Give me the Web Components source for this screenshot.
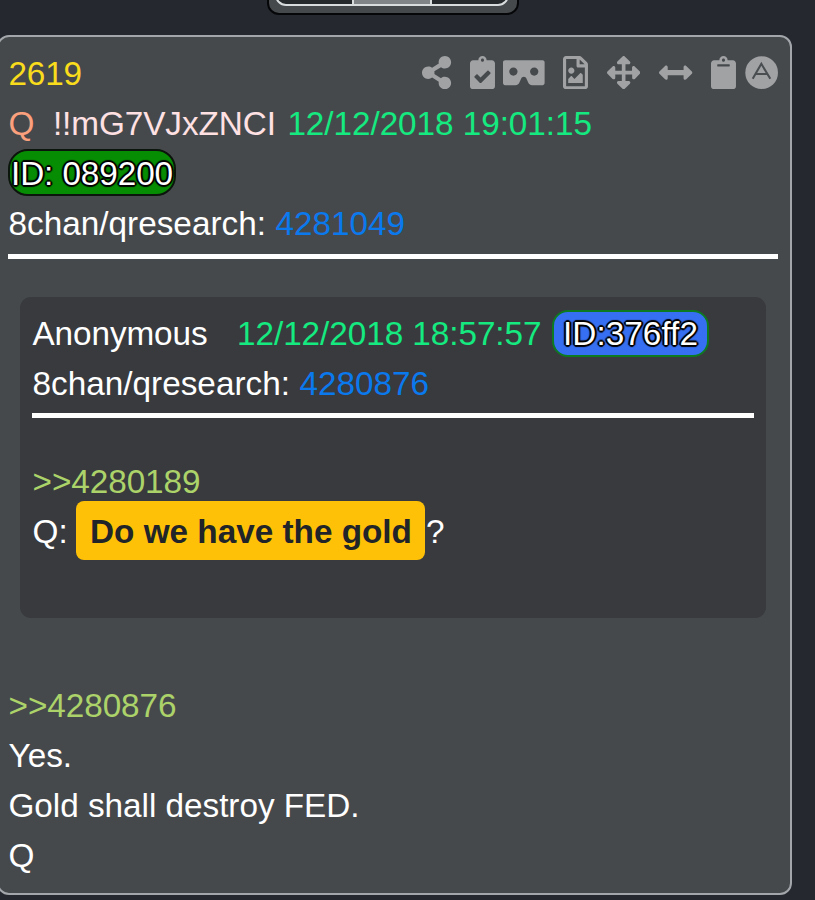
<!DOCTYPE html>
<html lang="en">
<head>
<meta charset="utf-8">
<title>2619</title>
<style>
	html, body {
		margin: 0;
		height: 900px;
		overflow: hidden;
		background: #25282f;
	}

	body {
		display: flex;
		flex-direction: column;
		font: 33.3px/50px "Liberation Sans", Arial, sans-serif;
		color: #fff;
	}
</style>
</head>
<body>
<page-switch></page-switch>
<post-card>
	<post-header slot="header" number="2619" board="8chan/qresearch:" link="4281049">
		<post-actions slot="actions"></post-actions>
		<text-run slot="author" tone="salmon">Q</text-run>
		<text-run slot="author" tone="trip" w="223" style="margin-left: 18px">!!mG7VJxZNCI</text-run>
		<text-run slot="author" tone="date" w="304.5" style="margin-left: 11px">12/12/2018 19:01:15</text-run>
		<id-badge slot="badge" tone="green">ID: 089200</id-badge>
	</post-header>
	<quoted-post>
		<post-header slot="header" board="8chan/qresearch:" link="4280876">
			<text-run slot="author" w="175">Anonymous</text-run>
			<text-run slot="author" tone="date" w="304.5" style="margin-left: 29px">12/12/2018 18:57:57</text-run>
			<id-badge slot="author" tone="blue">ID:376ff2</id-badge>
		</post-header>
		<post-line><text-run tone="quote" w="168">&gt;&gt;4280189</text-run></post-line>
		<post-line><text-run w="35.5">Q:</text-run><mark-text>Do we have the gold</mark-text><text-run>?</text-run></post-line>
	</quoted-post>
	<post-line><text-run tone="quote" w="168">&gt;&gt;4280876</text-run></post-line>
	<post-line><text-run>Yes.</text-run></post-line>
	<post-line><text-run w="351">Gold shall destroy FED.</text-run></post-line>
	<post-line><text-run>Q</text-run></post-line>
</post-card>

<script>
const define = (name, html, setup) => {
	const template = document.createElement('template');
	template.innerHTML = html;

	customElements.define(name, class extends HTMLElement {
		constructor() {
			super();
			this.attachShadow({ mode: 'open' }).appendChild(template.content.cloneNode(true));
		}

		connectedCallback() {
			if (setup) {
				setup(this, this.shadowRoot);
			}
		}
	});
};

// letter spacing that makes the span fill the given width
const fit = (span, width, length) => {
	document.addEventListener('DOMContentLoaded', () => {
		span.style.letterSpacing = (width - span.getBoundingClientRect().width) / length + 'px';
	});
};

define('page-switch', `
	<style>
		:host {
			flex: none;
			box-sizing: border-box;
			width: 252px;
			height: 45px;
			margin: -30px 0 0 267px;
			padding: 0 8px 7px 6px;
			display: flex;
			border: 2px solid #050608;
			border-radius: 12px;
			background: #46494c;
		}

		.group {
			flex: 1;
			display: flex;
			overflow: hidden;
			border: 2px solid #d9dcdd;
			border-radius: 11px;
			background: #25292c;
		}

		.group span {
			flex: 1;
		}

		.active {
			border: solid #d9dcdd;
			border-width: 0 2px;
			background: #808486;
		}
	</style>
	<div class="group"><span></span><span class="active"></span><span></span></div>
`);

define('post-card', `
	<style>
		:host {
			flex: none;
			box-sizing: border-box;
			width: 795px;
			height: 860px;
			margin: 20px 0 0 -3px;
			padding: 12px 12px 0 9px;
			display: flex;
			flex-direction: column;
			border: 2px solid #a3a6aa;
			border-radius: 12px;
			background: #46494c;
		}
	</style>
	<slot name="header"></slot>
	<slot></slot>
`);

define('quoted-post', `
	<style>
		:host {
			--header-gap: 4px;
			box-sizing: border-box;
			width: 746px;
			height: 321px;
			flex: none;
			margin: 38px 0 63px 12px;
			padding: 12px 12px 0;
			display: flex;
			flex-direction: column;
			border-radius: 11px;
			background: #383a3d;
		}

		.body {
			margin-top: 39px;
		}
	</style>
	<slot name="header"></slot>
	<div class="body"><slot></slot></div>
`);

define('post-header', `
	<style>
		:host {
			flex: none;
			display: flex;
			flex-direction: column;
			border-bottom: 5px solid #fff;
			padding-bottom: var(--header-gap, 5px);
		}

		.row {
			display: flex;
			height: 50px;
			align-items: center;
			white-space: nowrap;
		}

		.number {
			flex: 1;
			color: #f9dc1c;
		}

		.link {
			margin-left: 9px;
			color: #0b79ee;
		}

		[hidden] {
			display: none;
		}
	</style>
	<div class="row top"><text-run class="number" w="73.5"></text-run><slot name="actions"></slot></div>
	<div class="row"><slot name="author"></slot></div>
	<div class="row mid"><slot name="badge"></slot></div>
	<div class="row"><text-run class="board" w="257.5"></text-run><text-run class="link" w="129.5"></text-run></div>
`, (host, root) => {
	const number = host.getAttribute('number');

	root.querySelector('.number').textContent = number || '';
	root.querySelector('.board').textContent = host.getAttribute('board');
	root.querySelector('.link').textContent = host.getAttribute('link');
	root.querySelector('.top').hidden = !number;
	root.querySelector('.mid').hidden = !host.querySelector('[slot=badge]');
});

define('post-line', `
	<style>
		:host {
			flex: none;
			display: flex;
			height: 50px;
			align-items: center;
			white-space: nowrap;
		}
	</style>
	<slot></slot>
`);

define('text-run', `
	<style>
		:host {
			display: block;
			padding-left: 0.5px;
			white-space: nowrap;
		}

		:host([tone=salmon]) { color: #fba07c; }
		:host([tone=trip]) { color: #ffe1e3; }
		:host([tone=date]) { color: #15ea80; }
		:host([tone=quote]) { color: #acd36a; }
	</style>
	<span><slot></slot></span>
`, (host, root) => {
	const width = parseFloat(host.getAttribute('w'));

	if (width && host.textContent) {
		fit(root.querySelector('span'), width, host.textContent.length);
	}
});

define('id-badge', `
	<style>
		:host {
			box-sizing: border-box;
			height: 47px;
			display: block;
			line-height: 44px;
			white-space: nowrap;
			color: #fff;
			text-shadow:
				-2px 0 1px #000, 2px 0 1px #000, 0 -2px 1px #000, 0 2px 1px #000,
				-1px -1px 1px #000, 1px -1px 1px #000, -1px 1px 1px #000, 1px 1px 1px #000;
		}

		:host([tone=green]) {
			width: 168px;
			margin-top: -3px;
			padding-left: 1px;
			line-height: 46px;
			border: 2px solid #0b150b;
			border-radius: 20px;
			background: #078d04;
		}

		:host([tone=blue]) {
			width: 157px;
			margin: -2px 0 0 10.5px;
			padding-left: 9px;
			border: 2px solid #0d7a22;
			border-radius: 16px;
			background: #376ff2;
		}
	</style>
	<span><slot></slot></span>
`, (host, root) => {
	fit(root.querySelector('span'), host.getAttribute('tone') === 'green' ? 162 : 135, host.textContent.length);
});

define('mark-text', `
	<style>
		:host {
			flex: none;
			box-sizing: border-box;
			width: 349px;
			height: 59px;
			margin: -3px 0.5px 0 8px;
			padding: 2px 0 0 1px;
			display: flex;
			justify-content: center;
			align-items: center;
			border-radius: 8px;
			background: #ffc107;
			color: #212529;
			font-weight: bold;
		}
	</style>
	<slot></slot>
`);

define('post-actions', `
	<style>
		:host {
			display: flex;
			align-items: center;
			height: 34px;
			margin-top: -3px;
			color: #a0a2a4;
		}

		svg {
			flex: none;
			height: 33.3px;
			fill: currentColor;
		}
	</style>
	<svg viewBox="0 0 448 512"><path d="M352 320c-22.608 0-43.387 7.819-59.79 20.895l-102.486-64.054a96.551 96.551 0 0 0 0-41.683l102.486-64.054C308.613 184.181 329.392 192 352 192c53.019 0 96-42.981 96-96S405.019 0 352 0s-96 42.981-96 96c0 7.158.79 14.13 2.276 20.841L155.79 180.895C139.387 167.819 118.608 160 96 160c-53.019 0-96 42.981-96 96s42.981 96 96 96c22.608 0 43.387-7.819 59.79-20.895l102.486 64.054A96.301 96.301 0 0 0 256 416c0 53.019 42.981 96 96 96s96-42.981 96-96-42.981-96-96-96z"/></svg>
	<svg viewBox="0 0 384 512" style="margin-left: 18px"><path fill-rule="evenodd" d="M336 64h-80c0-35.3-28.7-64-64-64s-64 28.7-64 64H48C21.5 64 0 85.5 0 112v352c0 26.5 21.5 48 48 48h288c26.5 0 48-21.5 48-48V112c0-26.5-21.5-48-48-48zM192 40c13.3 0 24 10.7 24 24s-10.7 24-24 24-24-10.7-24-24 10.7-24 24-24zm121.2 231.8l-143 141.8c-4.7 4.7-12.3 4.6-17-.1l-82.6-83.3c-4.7-4.7-4.6-12.3.1-17L99.1 285c4.7-4.7 12.3-4.6 17 .1l46 46.4 106-105.2c4.7-4.7 12.3-4.6 17 .1l28.2 28.4c4.7 4.8 4.6 12.3-.1 17z"/></svg>
	<svg viewBox="0 0 640 512" style="margin-left: 8.5px"><path fill-rule="evenodd" d="M608 64H32C14.33 64 0 78.33 0 96v320c0 17.67 14.33 32 32 32h160.22c25.19 0 48.03-14.77 58.36-37.74l27.74-61.64C286.21 331.08 302.35 320 320 320s33.79 11.08 41.68 28.62l27.74 61.64C399.75 433.23 422.6 448 447.78 448H608c17.67 0 32-14.33 32-32V96c0-17.67-14.33-32-32-32zM160 304c-35.35 0-64-28.65-64-64s28.65-64 64-64 64 28.65 64 64-28.65 64-64 64zm320 0c-35.35 0-64-28.65-64-64s28.65-64 64-64 64 28.65 64 64-28.65 64-64 64z"/></svg>
	<svg viewBox="0 0 384 512" style="margin-left: 18.5px"><path fill-rule="evenodd" d="M369.9 97.9L286 14C277 5 264.8-.1 252.1-.1H48C21.5 0 0 21.5 0 48v416c0 26.5 21.5 48 48 48h288c26.5 0 48-21.5 48-48V131.9c0-12.7-5.1-25-14.1-34zM332.1 128H256V51.9l76.1 76.1zM48 464V48h160v104c0 13.3 10.7 24 24 24h104v288H48zm32-48h224V288l-23.5-23.5c-4.7-4.7-12.3-4.7-17 0L176 352l-39.5-39.5c-4.7-4.7-12.3-4.7-17 0L80 352v64zm48-240c-26.5 0-48 21.5-48 48s21.5 48 48 48 48-21.5 48-48-21.5-48-48-48z"/></svg>
	<svg viewBox="0 0 512 512" style="margin-left: 19px"><path d="M352.201 425.775l-79.196 79.196c-9.373 9.373-24.568 9.373-33.941 0l-79.196-79.196c-15.119-15.119-4.411-40.971 16.971-40.97h51.162L228 284H127.196v51.162c0 21.382-25.851 32.09-40.971 16.971L7.029 272.937c-9.373-9.373-9.373-24.569 0-33.941L86.225 159.8c15.119-15.119 40.971-4.411 40.971 16.971V228H228V127.196h-51.23c-21.382 0-32.09-25.851-16.971-40.971l79.196-79.196c9.373-9.373 24.568-9.373 33.941 0l79.196 79.196c15.119 15.119 4.411 40.971-16.971 40.971h-51.162V228h100.804v-51.162c0-21.382 25.851-32.09 40.97-16.971l79.196 79.196c9.373 9.373 9.373 24.569 0 33.941L427.773 352.2c-15.119 15.119-40.971 4.411-40.97-16.971V284H284v100.804h51.23c21.382 0 32.09 25.851 16.971 40.971z"/></svg>
	<svg viewBox="0 0 512 512" style="margin-left: 19px"><path d="M377.941 169.941V216H134.059v-46.059c0-21.382-25.851-32.09-40.971-16.971L7.029 239.029c-9.373 9.373-9.373 24.568 0 33.941l86.059 86.059c15.119 15.119 40.971 4.411 40.971-16.971V296h243.882v46.059c0 21.382 25.851 32.09 40.971 16.971l86.059-86.059c9.373-9.373 9.373-24.568 0-33.941l-86.059-86.059c-15.119-15.12-40.971-4.412-40.971 16.97z"/></svg>
	<svg viewBox="0 0 384 512" style="margin-left: 18px"><path fill-rule="evenodd" d="M384 112v352c0 26.51-21.49 48-48 48H48c-26.51 0-48-21.49-48-48V112c0-26.51 21.49-48 48-48h80c0-35.29 28.71-64 64-64s64 28.71 64 64h80c26.51 0 48 21.49 48 48zM192 40c-13.255 0-24 10.745-24 24s10.745 24 24 24 24-10.745 24-24-10.745-24-24-24m96 114v-20a6 6 0 0 0-6-6H102a6 6 0 0 0-6 6v20a6 6 0 0 0 6 6h180a6 6 0 0 0 6-6z"/></svg>
	<svg viewBox="0 0 32 32" style="margin-left: 9px"><circle cx="16" cy="16" r="15.7"/><path d="M7.4 21.8L15.7 7.5l8.6 14.3M10.3 17.3h11.2" fill="none" stroke="#4b4e51" stroke-width="2"/></svg>
`);
</script>
</body>
</html>
